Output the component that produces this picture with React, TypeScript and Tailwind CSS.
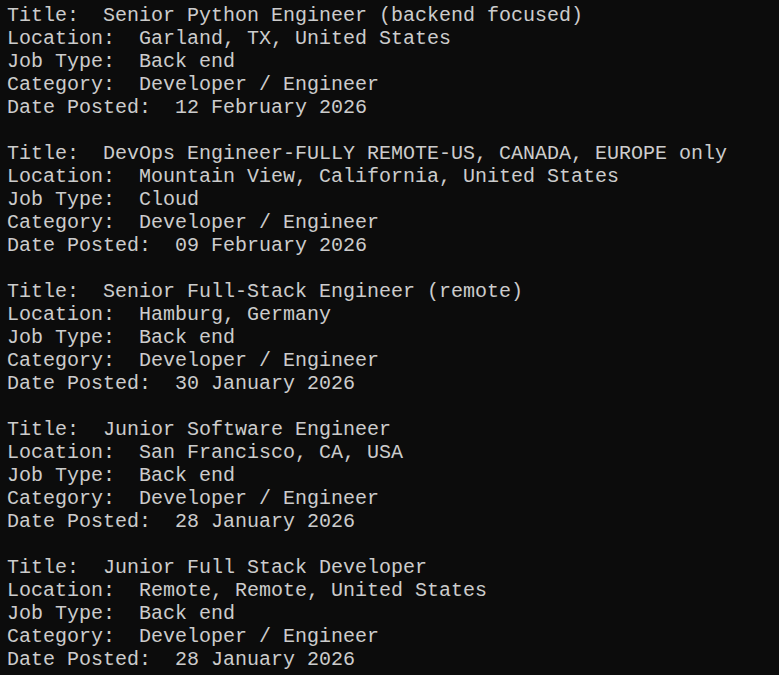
const jobs = [
  {
    title: "Senior Python Engineer (backend focused)",
    location: "Garland, TX, United States",
    type: "Back end",
    category: "Developer / Engineer",
    date: "12 February 2026",
  },
  {
    title: "DevOps Engineer-FULLY REMOTE-US, CANADA, EUROPE only",
    location: "Mountain View, California, United States",
    type: "Cloud",
    category: "Developer / Engineer",
    date: "09 February 2026",
  },
  {
    title: "Senior Full-Stack Engineer (remote)",
    location: "Hamburg, Germany",
    type: "Back end",
    category: "Developer / Engineer",
    date: "30 January 2026",
  },
  {
    title: "Junior Software Engineer",
    location: "San Francisco, CA, USA",
    type: "Back end",
    category: "Developer / Engineer",
    date: "28 January 2026",
  },
  {
    title: "Junior Full Stack Developer",
    location: "Remote, Remote, United States",
    type: "Back end",
    category: "Developer / Engineer",
    date: "28 January 2026",
  },
];

export default function App() {
  return (
    <div className="w-[779px] h-[675px] overflow-hidden bg-[#0c0c0c] text-[#cccccc] pt-1 pl-[7px] font-['Liberation_Mono',monospace] text-[20px] leading-[23px]">
      {jobs.map((job, i) => (
        <div key={i} className="whitespace-pre">
          {i > 0 && <div>&nbsp;</div>}
          <div>{"Title:  " + job.title}</div>
          <div>{"Location:  " + job.location}</div>
          <div>{"Job Type:  " + job.type}</div>
          <div>{"Category:  " + job.category}</div>
          <div>{"Date Posted:  " + job.date}</div>
        </div>
      ))}
    </div>
  );
}
